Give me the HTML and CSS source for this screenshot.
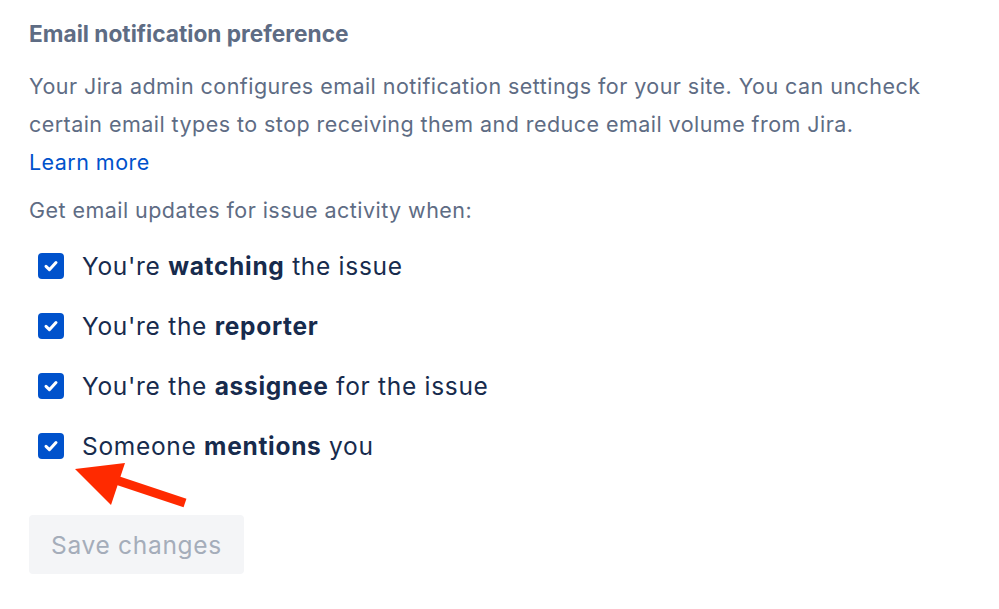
FILE: index.html
```html
<!DOCTYPE html>
<html>
<head>
<meta charset="utf-8">
<link rel="stylesheet" href="styles.css">
</head>
<body>
<div class="page">
  <h2 class="title">Email notification preference</h2>
  <p class="desc">Your Jira admin configures email notification settings for your site. You can uncheck certain email types to stop receiving them and reduce email volume from Jira.<br><a class="link" href="#">Learn more</a></p>
  <p class="lead">Get email updates for issue activity when:</p>
  <div class="options">
    <label class="opt"><span class="box"><svg viewBox="0 0 26 26" width="26" height="26"><path d="M8 13.4l3.4 3.3L18 9.6" fill="none" stroke="#fff" stroke-width="3" stroke-linecap="round" stroke-linejoin="round"/></svg></span><span>You're <b>watching</b> the issue</span></label>
    <label class="opt"><span class="box"><svg viewBox="0 0 26 26" width="26" height="26"><path d="M8 13.4l3.4 3.3L18 9.6" fill="none" stroke="#fff" stroke-width="3" stroke-linecap="round" stroke-linejoin="round"/></svg></span><span>You're the <b>reporter</b></span></label>
    <label class="opt"><span class="box"><svg viewBox="0 0 26 26" width="26" height="26"><path d="M8 13.4l3.4 3.3L18 9.6" fill="none" stroke="#fff" stroke-width="3" stroke-linecap="round" stroke-linejoin="round"/></svg></span><span>You're the <b>assignee</b> for the issue</span></label>
    <label class="opt"><span class="box"><svg viewBox="0 0 26 26" width="26" height="26"><path d="M8 13.4l3.4 3.3L18 9.6" fill="none" stroke="#fff" stroke-width="3" stroke-linecap="round" stroke-linejoin="round"/></svg></span><span>Someone <b>mentions</b> you</span></label>
  </div>
  <button class="save" type="button">Save changes</button>
  <svg class="arrow" width="140" height="60" viewBox="0 0 140 60">
    <line x1="112" y1="40" x2="40" y2="16" stroke="#FF2A00" stroke-width="9"/>
    <polygon points="2,6 52,0 38,42" fill="#FF2A00"/>
  </svg>
</div>
</body>
</html>
```

FILE: styles.css
```css
html, body {
  margin: 0;
  padding: 0;
  background: #ffffff;
}
.page {
  position: relative;
  width: 999px;
  height: 609px;
  padding: 20px 0 0 29px;
  box-sizing: border-box;
  font-family: Inter, "Noto Sans", sans-serif;
}
.title {
  margin: 0;
  font-size: 22.7px;
  line-height: 28px;
  font-weight: 700;
  color: #5E6C84;
}
.desc {
  margin: 19px 0 0;
  font-size: 21.5px;
  letter-spacing: 0.45px;
  line-height: 38px;
  color: #5E6C84;
}
.link {
  color: #0052CC;
  text-decoration: none;
}
.lead {
  margin: 10px 0 0;
  font-size: 21.5px;
  letter-spacing: 0.45px;
  line-height: 38px;
  color: #5E6C84;
}
.options {
  margin-top: 7px;
  display: flex;
  flex-direction: column;
}
.opt {
  height: 60px;
  display: flex;
  align-items: center;
  gap: 18px;
  padding-left: 9px;
  font-size: 24.5px;
  letter-spacing: 0.7px;
  color: #172B4D;
}
.opt b {
  font-weight: 700;
}
.box {
  width: 26px;
  height: 26px;
  border-radius: 4px;
  background: #0052CC;
  display: flex;
}
.save {
  margin-top: 39px;
  width: 215px;
  height: 59px;
  border: none;
  border-radius: 4px;
  background: #F4F5F7;
  color: #A5ADBA;
  font-family: Inter, "Noto Sans", sans-serif;
  font-size: 24.5px;
  letter-spacing: 0.7px;
  padding: 0;
  display: block;
}
.arrow {
  position: absolute;
  left: 73px;
  top: 463px;
}
```
